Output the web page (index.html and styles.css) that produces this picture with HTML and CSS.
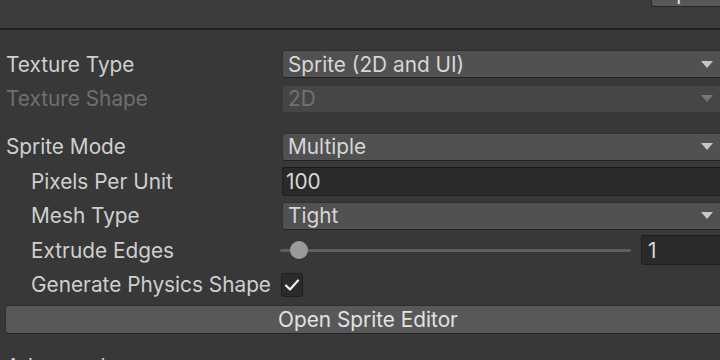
FILE: index.html
```html
<!DOCTYPE html>
<html>
<head>
<meta charset="utf-8">
<link rel="stylesheet" href="styles.css">
</head>
<body>
<div class="page">
  <div class="header">
    <div class="hbtn"><span class="hbtn-text">Open</span></div>
  </div>
  <div class="content">
    <div class="row">
      <div class="label">Texture Type</div>
      <div class="dropdown"><span>Sprite (2D and UI)</span><i class="arrow"></i></div>
    </div>
    <div class="row">
      <div class="label disabled">Texture Shape</div>
      <div class="dropdown is-disabled"><span>2D</span><i class="arrow"></i></div>
    </div>
    <div class="row section">
      <div class="label">Sprite Mode</div>
      <div class="dropdown"><span>Multiple</span><i class="arrow"></i></div>
    </div>
    <div class="row">
      <div class="label indent">Pixels Per Unit</div>
      <div class="field"><span>100</span></div>
    </div>
    <div class="row">
      <div class="label indent">Mesh Type</div>
      <div class="dropdown"><span>Tight</span><i class="arrow"></i></div>
    </div>
    <div class="row">
      <div class="label indent">Extrude Edges</div>
      <div class="slider">
        <div class="track"><div class="thumb"></div></div>
        <div class="field num"><span>1</span></div>
      </div>
    </div>
    <div class="row">
      <div class="label indent">Generate Physics Shape</div>
      <div class="check">
        <svg width="16" height="14" viewBox="0 0 16 14"><polyline points="2,7.5 6,11.5 14,2.5" fill="none" stroke="#f0f0f0" stroke-width="2.2" stroke-linecap="round" stroke-linejoin="round"/></svg>
      </div>
    </div>
    <div class="row btnrow">
      <div class="button">Open Sprite Editor</div>
    </div>
    <div class="row">
      <div class="label">Advanced</div>
    </div>
  </div>
</div>
</body>
</html>
```

FILE: styles.css
```css
html, body {
  margin: 0;
  padding: 0;
  background: #383838;
  overflow: hidden;
}
.page {
  width: 720px;
  height: 360px;
  overflow: hidden;
  font-family: Inter, "Liberation Sans", sans-serif;
  font-size: 20.8px;
  color: #cacaca;
}
.header {
  height: 28px;
  background: #3c3c3c;
  border-bottom: 2px solid #202020;
  display: flex;
  justify-content: flex-end;
  align-items: flex-start;
}
.hbtn {
  width: 70px;
  height: 6px;
  margin-right: -2px;
  background: #585858;
  border-bottom: 1px solid #262626;
  border-left: 1px solid #2a2a2a;
  border-radius: 0 0 3px 3px;
  overflow: hidden;
  display: flex;
  justify-content: center;
  align-items: flex-start;
}
.hbtn-text {
  font-size: 20.8px;
  line-height: 20px;
  color: #e0e0e0;
  margin-top: -17px;
  flex: none;
}
.content {
  padding-top: 20px;
  display: flex;
  flex-direction: column;
  gap: 6.5px;
  width: 726px;
}
.row {
  display: flex;
  align-items: center;
  height: 28px;
  flex: none;
}
.row.section {
  margin-top: 13.5px;
}
.label {
  width: 282px;
  flex: none;
  box-sizing: border-box;
  padding-left: 6px;
  white-space: nowrap;
  color: #cfcfcf;
}
.label.indent {
  padding-left: 31px;
}
.label.disabled {
  color: #6f6f6f;
}
.dropdown {
  flex: 1;
  height: 28px;
  box-sizing: border-box;
  background: #515151;
  border: 1px solid #303030;
  border-bottom-color: #242424;
  border-radius: 3px;
  display: flex;
  align-items: center;
  justify-content: space-between;
  padding: 0 12px 0 5px;
  color: #d6d6d6;
}
.dropdown.is-disabled {
  background: #464646;
  border-color: #3a3a3a;
  color: #727272;
}
.arrow {
  width: 0;
  height: 0;
  border-left: 6px solid transparent;
  border-right: 6px solid transparent;
  border-top: 7px solid #c6c6c6;
}
.is-disabled .arrow {
  border-top-color: #767676;
}
.field {
  flex: 1;
  height: 29px;
  box-sizing: border-box;
  background: #2a2a2a;
  border: 1px solid #202020;
  border-top-color: #1a1a1a;
  border-radius: 3px;
  display: flex;
  align-items: center;
  padding-left: 3px;
  color: #d8d8d8;
}
.slider {
  flex: 1;
  display: flex;
  align-items: center;
  gap: 10px;
  margin-left: -2px;
}
.track {
  width: 351px;
  flex: none;
  height: 3px;
  background: #5e5e5e;
  border-radius: 2px;
  display: flex;
  align-items: center;
}
.thumb {
  width: 18px;
  height: 18px;
  border-radius: 50%;
  background: #9a9a9a;
  margin-left: 10px;
  flex: none;
}
.field.num {
  flex: 1;
  height: 30px;
  padding-left: 6px;
}
.check {
  width: 22px;
  height: 24px;
  box-sizing: border-box;
  margin-left: -1px;
  background: #2b2b2b;
  border: 1px solid #1e1e1e;
  border-radius: 3px;
  display: flex;
  align-items: center;
  justify-content: center;
}
.btnrow {
  padding-left: 5px;
}
.button {
  flex: 1;
  height: 29px;
  box-sizing: border-box;
  background: #585858;
  border: 1px solid #2e2e2e;
  border-bottom-color: #232323;
  border-radius: 4px;
  display: flex;
  align-items: center;
  justify-content: center;
  color: #e2e2e2;
  margin-right: -5px;
}
.btnrow + .row {
  margin-top: 13px;
}
```
